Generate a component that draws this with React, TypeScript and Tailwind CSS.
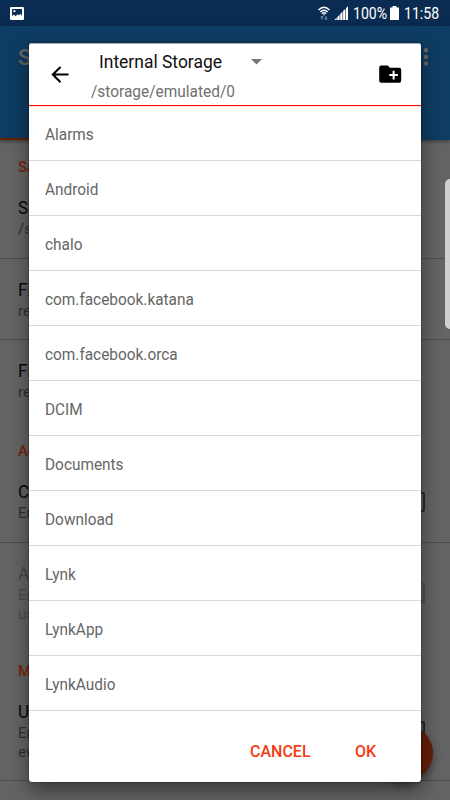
import React from "react";

const folders = [
  "Alarms",
  "Android",
  "chalo",
  "com.facebook.katana",
  "com.facebook.orca",
  "DCIM",
  "Documents",
  "Download",
  "Lynk",
  "LynkApp",
  "LynkAudio",
];

function StatusBar() {
  return (
    <div className="flex h-[26px] shrink-0 items-center bg-[#0a2c52] pl-[10px] pr-[11px] text-white">
      <svg width="14" height="13" viewBox="0 0 14 13">
        <rect width="14" height="13" rx="1.2" fill="#fff" />
        <path d="M2 2h10v7l-1.5-2.2-1.6 1.5-1.2-1-2.2 2L4 7.500 2 9z" fill="#0a2c52" />
        <circle cx="4.400" cy="4.200" r="1.100" fill="#fff" />
      </svg>
      <div className="ml-auto flex items-center">
        <svg width="12" height="14" viewBox="0 0 12 14" fill="none" stroke="#fff" strokeWidth="1.400">
          <path d="M.5 4Q6-1.500 11.500 4M2.300 6Q6 2.300 9.700 6M4 7.800Q6 5.900 8 7.800" />
          <circle cx="6" cy="8.700" r=".7" fill="#fff" stroke="none" />
          <path d="M4 13.500V10M2.800 11.300L4 10l1.200 1.300M8 10v3.500M6.800 12.200L8 13.500l1.200-1.300" stroke="#8296ad" strokeWidth="1" />
        </svg>
        <svg className="ml-[4px]" width="15" height="14" viewBox="0 0 15 14" fill="#fff">
          <path d="M.3 14l2.400-2.300V14zM3.300 10.900l2.300-2.200V14H3.300zM6.200 8l2.300-2.200V14H6.200zM9.100 5.100l2.200-2.100V14H9.100zM11.900 2.300L14 .2V14h-2.100z" />
        </svg>
        <span className="ml-[4px] w-[35px] whitespace-nowrap text-[17px] leading-none">
          <span className="inline-block origin-left scale-x-[.83]">100%</span>
        </span>
        <svg className="ml-[2px]" width="9" height="14" viewBox="0 0 9 14">
          <path d="M2.500 0h4v1.500H9V14H0V1.500h2.500z" fill="#fff" />
        </svg>
        <span className="ml-[5px] w-[35px] whitespace-nowrap text-[17px] leading-none">
          <span className="inline-block origin-left scale-x-[.83]">11:58</span>
        </span>
      </div>
    </div>
  );
}

function Checkbox({ faded = false }: { faded?: boolean }) {
  return (
    <div
      className={
        "h-[20px] w-[20px] shrink-0 rounded-[2px] border-2 " +
        (faded ? "border-[#505050]" : "border-[#292929]")
      }
    />
  );
}

function Category({ children }: { children: React.ReactNode }) {
  return (
    <div className="origin-left scale-x-[.96] text-[15.500px] font-medium leading-[20px] text-[#7d220a]">
      {children}
    </div>
  );
}

function Title({ faded = false, children }: { faded?: boolean; children: React.ReactNode }) {
  return (
    <div className={"origin-left scale-x-[.95] text-[18px] leading-[24px] " + (faded ? "text-[#464646]" : "text-[#080808]")}>
      {children}
    </div>
  );
}

function Summary({ faded = false, children }: { faded?: boolean; children: React.ReactNode }) {
  return (
    <div className={"origin-left scale-x-[.96] text-[15.500px] leading-[19px] " + (faded ? "text-[#4c4c4c]" : "text-[#303030]")}>
      {children}
    </div>
  );
}

function SettingsPage() {
  return (
    <div className="flex h-[800px] flex-col overflow-hidden bg-[#646464]">
      <StatusBar />
      <header className="relative z-10 flex h-[114px] shrink-0 justify-between bg-[#0e3c62] pl-[18px] pr-[21px] shadow-[0_1px_4px_rgba(0,0,0,.5)]">
        <span className="pt-[18px] text-[22px] font-medium leading-[28px] text-[#646464]">S</span>
        <svg className="mt-[21px]" width="6" height="20" viewBox="0 0 6 20" fill="#666">
          <circle cx="3" cy="3.300" r="2.200" />
          <circle cx="3" cy="9.900" r="2.200" />
          <circle cx="3" cy="16.500" r="2.200" />
        </svg>
        <div className="absolute bottom-0 left-0 h-[2px] w-[140px] bg-[#652006]" />
      </header>
      <section className="h-[119px] shrink-0 border-b border-[#4d4d4d] pl-[18px] pt-[17px]">
        <Category>Sa</Category>
        <div className="mt-[19px]">
          <Title>Sa</Title>
          <Summary>/s</Summary>
        </div>
      </section>
      <section className="h-[81px] shrink-0 border-b border-[#4d4d4d] pl-[18px] pt-[19px]">
        <Title>Fi</Title>
        <Summary>re</Summary>
      </section>
      <section className="h-[203px] shrink-0 border-b border-[#4d4d4d] pl-[18px] pr-[25px] pt-[19px]">
        <Title>Fi</Title>
        <Summary>re</Summary>
        <div className="mt-[39px]">
          <Category>Ad</Category>
        </div>
        <div className="mt-[19px] flex items-center justify-between">
          <div>
            <Title>C</Title>
            <Summary>En</Summary>
          </div>
          <Checkbox />
        </div>
      </section>
      <section className="h-[238px] shrink-0 border-b border-[#4d4d4d] pl-[18px] pr-[25px] pt-[19px]">
        <div className="flex items-center justify-between">
          <div>
            <Title faded>A</Title>
            <Summary faded>En<br />us</Summary>
          </div>
          <Checkbox faded />
        </div>
        <div className="mt-[37px]">
          <Category>Mi</Category>
        </div>
        <div className="mt-[19px] flex items-center justify-between">
          <div>
            <Title>U</Title>
            <Summary>En<br />ev</Summary>
          </div>
          <Checkbox />
        </div>
      </section>
    </div>
  );
}

function FolderDialog() {
  return (
    <div className="absolute left-[29px] top-[43px] z-30 flex h-[739px] w-[392px] flex-col rounded-[3px] bg-white shadow-[0_8px_20px_rgba(0,0,0,.45),0_0_2px_rgba(0,0,0,.6)]">
      <div className="flex h-[63px] shrink-0 rounded-t-[3px] border-b border-t border-b-[#ff0c00] border-t-[#9fb1c0] shadow-[0_1px_0_#fbe0dc]">
        <svg className="ml-[22px] mt-[22px]" width="18" height="18" viewBox="0 0 18 18" fill="none" stroke="#000" strokeWidth="2">
          <path d="M17.500 8.500H1.500M9.500 1L1.800 8.500 9.500 16.300" />
        </svg>
        <div className="ml-[22px] flex-1">
          <div className="flex items-center pl-[8px] pt-[6px]">
            <span className="w-[152px] origin-left scale-x-[.97] text-[18px] leading-[24px] text-[#111]">Internal Storage</span>
            <svg width="11" height="6" viewBox="0 0 11 6">
              <path d="M0 0h11L5.500 5.500z" fill="#777" />
            </svg>
          </div>
          <div className="mt-[8px] origin-left scale-x-[.965] text-[16px] leading-[20px] text-[#707070]">/storage/emulated/0</div>
        </div>
        <svg className="mr-[19px] mt-[21px]" width="23" height="19" viewBox="0 0 23 19">
          <path d="M2.200.5h6.500l2.300 2.200h9.200q2 0 2 2v11q0 2-2 2h-18q-2 0-2-2V2.500q0-2 2-2z" fill="#000" />
          <path d="M14.600 5.800v8.600M10.300 10.100h8.600" stroke="#fff" strokeWidth="2" />
        </svg>
      </div>
      <ul className="flex flex-col">
        {folders.map((name) => (
          <li key={name} className="flex h-[55px] items-center border-b border-[#d8d8d8] pl-[16px] pt-[3px] text-[16px] text-[#666]">
            <span className="origin-left scale-x-[.962]">{name}</span>
          </li>
        ))}
      </ul>
      <div className="flex flex-1 items-center pl-[221px] pt-[10px] text-[16px] font-medium text-[#f43b12]">
        <button className="w-[105px] text-left">CANCEL</button>
        <button>OK</button>
      </div>
    </div>
  );
}

export default function App() {
  return (
    <div className="relative h-[800px] w-[450px] overflow-hidden font-['Roboto',sans-serif]">
      <SettingsPage />
      <div className="absolute left-[377px] top-[725px] z-20 h-[56px] w-[56px] rounded-full bg-[#651f0a] shadow-[0_4px_8px_rgba(0,0,0,.4)]" />
      <FolderDialog />
      <div className="absolute left-[445px] top-[179px] z-30 h-[150px] w-[10px] rounded-[5px] bg-[#cfcfcf]" />
    </div>
  );
}
